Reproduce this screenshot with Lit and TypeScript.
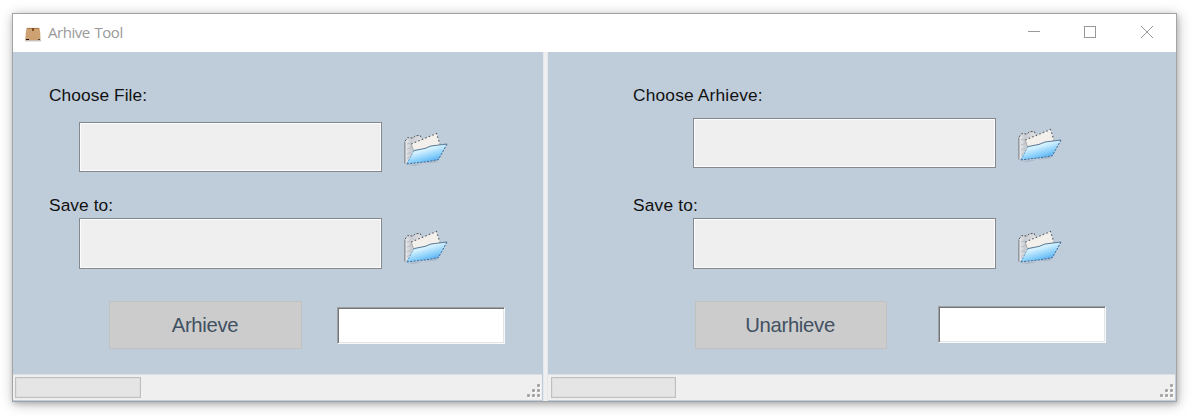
import { LitElement, html, css, svg } from "lit";
import { customElement, property } from "lit/decorators.js";

@customElement("folder-icon")
class FolderIcon extends LitElement {
  static styles = css`
    :host { display: block; width: 48px; height: 40px; }
    .art { display: block; width: 48px; height: 40px; }
  `;
  render() {
    return html`<svg class="art" viewBox="0 0 48 40">
      <defs>
        <linearGradient id="blue" x1="0.15" y1="0" x2="0.75" y2="1">
          <stop offset="0" stop-color="#8fd0f8" />
          <stop offset="0.35" stop-color="#d6f2ff" />
          <stop offset="0.7" stop-color="#7ecafa" />
          <stop offset="1" stop-color="#3f96e4" />
        </linearGradient>
        <linearGradient id="back" x1="0" y1="0" x2="1" y2="0">
          <stop offset="0" stop-color="#eceef0" />
          <stop offset="0.35" stop-color="#c9ccd1" />
          <stop offset="1" stop-color="#dfe1e4" />
        </linearGradient>
      </defs>
      <path d="M5 36 L34 33.5 L37.5 30.5 L12 37Z" fill="#8fa0b2" opacity="0.45" />
      <path d="M2.8 34 V12.5 L5.5 8.5 L11 8.8 L13.5 6.6 L18 6.5 L20 10 L19 30 L5 35Z" fill="url(#back)" />
      <path d="M2.9 34.5 V12.5" stroke="#70767e" stroke-width="1" fill="none" />
      <path d="M3.2 12 L5.5 8.7 L11 9 L13.5 6.7 L18.2 6.5 L19.5 9.5" stroke="#4f555c" stroke-width="1" stroke-dasharray="2 1.5" fill="none" />
      <path d="M5 15 L8.5 14 M5 20 L9.5 18.5 M5 25 L9 23 M5 29.5 L7 28.5" stroke="#b9bdc3" fill="none" />
      <path d="M9.2 15 L34.5 4.5 L38.5 17 L15 26 L11.5 24Z" fill="#f3efeb" />
      <path d="M9.2 15 L34.5 4.5 L38 15.5" fill="none" stroke="#555a60" stroke-width="1.1" stroke-dasharray="1.6 2.2" />
      <path d="M9.2 15 L11.5 22" fill="none" stroke="#8f9399" stroke-width="0.8" />
      <path d="M4.5 34.8 L11.8 21.6 L23 19.4 L29 17 L45 15 L36.4 30.6 L26 32.6Z" fill="url(#blue)" />
      <path d="M11.8 21.6 L23 19.4 L29 17 L45 15" fill="none" stroke="#5a7a95" stroke-width="1" />
      <path d="M5 34.8 L11.8 21.6" fill="none" stroke="#5c91b8" stroke-width="0.9" stroke-dasharray="2 1.2" />
      <path d="M45 15 L36.4 30.6 L26 32.6 L4 35" fill="none" stroke="#3f6c98" stroke-width="1" stroke-dasharray="2.2 1.2" />
    </svg>`;
  }
}

@customElement("archive-pane")
class ArchivePane extends LitElement {
  @property() heading = "";
  @property() action = "";
  static styles = css`
    :host { display: flex; flex-direction: column; box-sizing: border-box; background: #bfccda; font-family: "Liberation Sans", Arial, sans-serif; }
    .form { height: 322px; box-sizing: border-box; padding: 33px 0 0 36px; }
    .label { height: 20px; line-height: 20px; font-size: 17.33px; letter-spacing: 0.07px; color: #111; white-space: nowrap; }
    .row { display: flex; margin-left: 30px; }
    .first { margin-top: 17px; }
    .second-label { margin-top: 23px; }
    .second { margin-top: 3px; }
    .field { box-sizing: border-box; width: 303px; height: 50px; background: #efefef; border: 1px solid #85888d; box-shadow: inset 0 0 0 1px #fcfcfc; }
    .second .field { height: 51px; }
    folder-icon { margin: 7px 0 0 20px; }
    .second folder-icon { margin-top: 9px; }
    .actions { display: flex; margin: 32px 0 0 60px; }
    .button { box-sizing: border-box; width: 193px; height: 48px; border: 1px solid #c1c1c2; background: #ccc; color: #415062; font: 20.3px/46px "Liberation Sans", Arial, sans-serif; letter-spacing: -0.3px; padding: 0 1px 2px 0; text-align: center; }
    .entry { box-sizing: border-box; width: 168px; height: 37px; margin: 6px 0 0 35px; background: #fff; border: 1px solid; border-color: #9da1a6 #f8f9fa #f8f9fa #9da1a6; box-shadow: inset 1px 1px 0 #747474, inset -1px -1px 0 #e4e4e4; }
    :host([wide]) .form { padding-left: 85px; }
    :host([wide]) .label { letter-spacing: 0.18px; }
    :host([wide]) .row { margin-left: 60px; }
    :host([wide]) .first { margin-top: 13px; }
    :host([wide]) .second-label { margin-top: 27px; }
    :host([wide]) .actions { margin-left: 62px; }
    :host([wide]) .button { width: 192px; padding-right: 2px; }
    :host([wide]) .entry { margin: 5px 0 0 51px; }
    .status { display: flex; justify-content: space-between; box-sizing: border-box; height: 26px; margin-right: 1px; padding: 2px 0 3px 2px; background: #efefef; border-top: 1px solid #dce0e5; }
    .progress { box-sizing: border-box; width: 126px; height: 21px; border: 1px solid #bfbfbf; background: #e5e5e5; box-shadow: inset 0 0 0 1px #dedede; }
    :host([wide]) .progress { margin-left: 1px; width: 125px; }
    .grip { width: 15px; height: 15px; margin-top: 7px; }
  `;
  render() {
    const dots = [[10, 0], [5, 5], [10, 5], [0, 10], [5, 10], [10, 10]];
    return html`
      <div class="form">
        <div class="label">${this.heading}</div>
        <div class="row first"><div class="field"></div><folder-icon></folder-icon></div>
        <div class="label second-label">Save to:</div>
        <div class="row second"><div class="field"></div><folder-icon></folder-icon></div>
        <div class="actions"><button class="button">${this.action}</button><div class="entry"></div></div>
      </div>
      <div class="status">
        <div class="progress"></div>
        <svg class="grip" viewBox="0 0 15 15">
          ${dots.map(([x, y]) => svg`<rect x=${x + 1} y=${y + 1} width="3" height="3" fill="#fafafa"/><rect x=${x} y=${y} width="3" height="3" rx="1" fill="#a3a3a3"/>`)}
        </svg>
      </div>`;
  }
}

@customElement("app-root")
class AppRoot extends LitElement {
  static styles = css`
    :host { display: block; box-sizing: border-box; width: 1198px; height: 416px; padding: 13px 0 0 12px; background: #fff; overflow: hidden; }
    .window { box-sizing: border-box; width: 1165px; height: 389px; border: 1px solid #a2a4a7; box-shadow: 1px 2px 12px rgba(0, 0, 0, 0.27), 1px 2px 5px rgba(0, 0, 0, 0.16); }
    .titlebar { display: flex; height: 38px; background: #fff; }
    .box { width: 18px; height: 16px; margin: 12px 6px 0 11px; }
    .title { flex: 1; font: 15px/37px "Open Sans", sans-serif; color: #999; letter-spacing: -0.45px; word-spacing: 1.2px; }
    .controls { width: 168px; height: 38px; }
    .panes { display: grid; grid-template-columns: 530px 5px 628px; height: 349px; }
    .splitter { box-sizing: border-box; background: #efefef; border: solid #e4e8ec; border-width: 0 1px; }
  `;
  render() {
    return html`<div class="window">
      <div class="titlebar">
        <svg class="box" viewBox="0 0 18 16">
          <defs><linearGradient id="card" x1="0" y1="0" x2="0" y2="1"><stop offset="0" stop-color="#cfa474" /><stop offset="1" stop-color="#cca070" /></linearGradient></defs>
          <path d="M1 14h16v1.5H1z" fill="#c8cac8" />
          <path d="M2.6 2h12.8l.8 4 .3 8.2H1.2L1.8 6Z" fill="url(#card)" />
          <path d="M3 2.4h12" stroke="#a87444" />
          <path d="M8 2h2v3H8z" fill="#824b20" />
          <path d="M2 13.5h3M14.3 13.5h1.4" stroke="#161310" />
        </svg>
        <div class="title">Arhive Tool</div>
        <svg class="controls" viewBox="0 0 168 38" fill="none" stroke="#999">
          <path d="M20 17.5h12" />
          <rect x="76.5" y="12.5" width="11" height="11" />
          <path d="M133 12l12 12M145 12l-12 12" />
        </svg>
      </div>
      <div class="panes">
        <archive-pane heading="Choose File:" action="Arhieve"></archive-pane>
        <div class="splitter"></div>
        <archive-pane wide heading="Choose Arhieve:" action="Unarhieve"></archive-pane>
      </div>
    </div>`;
  }
}
